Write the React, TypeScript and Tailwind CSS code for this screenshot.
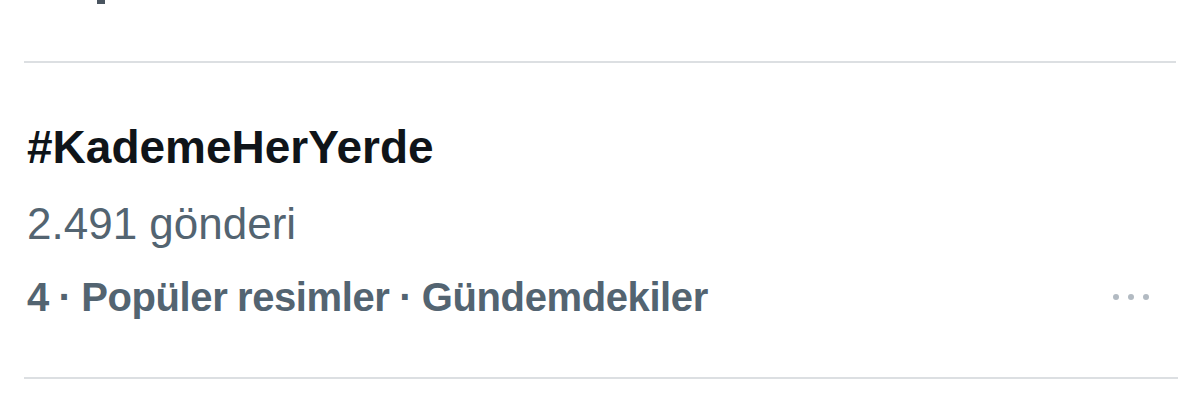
import { FC } from 'react';

const font = { fontFamily: '"Liberation Sans", Arial, sans-serif' };

const MoreDots: FC = () => (
  <div className="flex items-center gap-[9px] pr-[51px]">
    <span className="h-[6px] w-[6px] rounded-full bg-[#b2bac2]" />
    <span className="h-[6px] w-[6px] rounded-full bg-[#b2bac2]" />
    <span className="h-[6px] w-[6px] rounded-full bg-[#b2bac2]" />
  </div>
);

const App: FC = () => {
  return (
    <div
      className="h-[404px] w-[1200px] overflow-hidden bg-white"
      style={font}
    >
      <div className="ml-[97px] h-[4px] w-[8px] bg-[#4a5560]" />
      <div className="ml-[24px] mr-[24px] mt-[57px] h-[2px] bg-[#dcdfe2]" />

      <div className="pl-[27px] pt-[58px]">
        <h2 className="text-[46px] font-bold leading-[52px] text-[#0f1419]">
          #KademeHerYerde
        </h2>
        <p className="mt-[25px] text-[44px] leading-[52px] text-[#536471]">
          2.491 gönderi
        </p>
        <div className="mt-[23px] flex items-center justify-between">
          <p className="text-[40px] font-bold leading-[48px] tracking-[-0.4px] [word-spacing:-1px] text-[#536471]">
            4 · Popüler resimler · Gündemdekiler
          </p>
          <MoreDots />
        </div>
      </div>

      <div className="ml-[24px] mr-[22px] mt-[56px] h-[2px] bg-[#dcdfe2]" />
    </div>
  );
};

export default App;
